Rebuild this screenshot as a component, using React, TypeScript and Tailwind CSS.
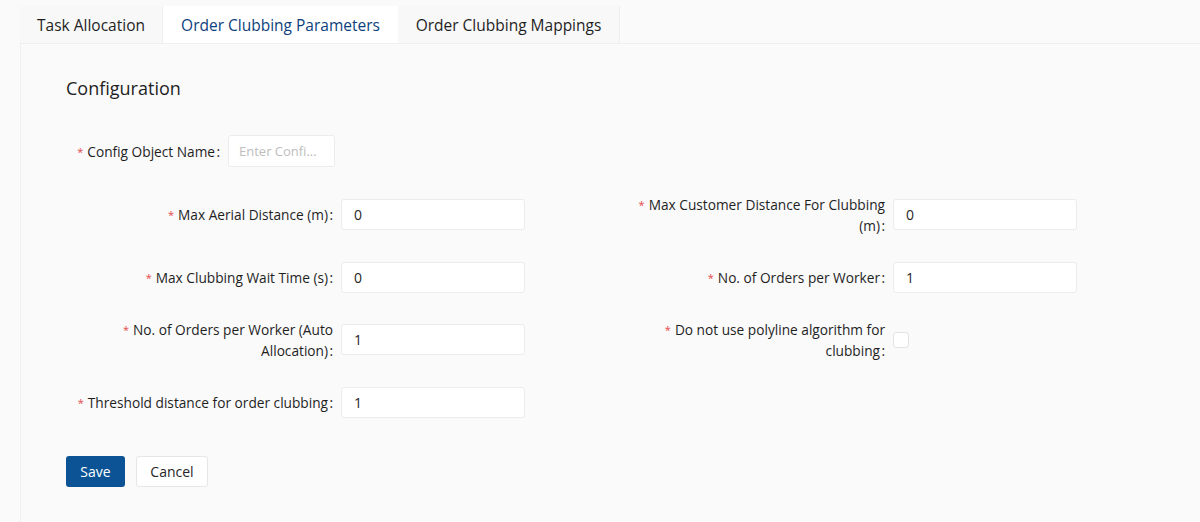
import React from "react";

const font = { fontFamily: '"Open Sans", "Noto Sans", sans-serif' };

function Label({ text, width }: { text: string; width: string }) {
  return (
    <div className={`${width} shrink-0 flex justify-end pr-2`}>
      <div className="text-right text-[13.7px] leading-[21px] text-[#1f1f1f]">
        <span className="text-[#e5484d] mr-1 text-[11px] align-top">*</span>
        {`${text}\u200a:`}
      </div>
    </div>
  );
}

function Field({ label, value }: { label: string; value: string }) {
  return (
    <div className="flex items-center h-[31px]">
      <Label text={label} width="w-[275px]" />
      <input
        readOnly
        value={value}
        className="w-[184px] h-[31px] shrink-0 bg-white border border-[#ececec] rounded-[3px] px-3 text-[14px] text-[#262626] outline-none"
      />
    </div>
  );
}

function CheckField({ label }: { label: string }) {
  return (
    <div className="flex items-center h-[31px]">
      <Label text={label} width="w-[275px]" />
      <div className="w-[16px] h-[16px] bg-white border border-[#e3e3e3] rounded-[3px]" />
    </div>
  );
}

export default function App() {
  return (
    <div className="w-[1200px] h-[522px] bg-[#fafafa] overflow-hidden" style={font}>
      <div className="pl-[20px] pt-[6px]">
        <div className="flex h-[38px] border-b border-[#efefef]">
          <div className="w-[143px] flex items-center justify-center pt-[2px] text-[15.5px] text-[#1f1f1f] bg-[#f8f8f8] border-r border-[#f0f0f0]">
            Task Allocation
          </div>
          <div className="w-[235px] flex items-center justify-center pt-[2px] text-[15.5px] text-[#0d3f7d] bg-white">
            Order Clubbing Parameters
          </div>
          <div className="w-[222px] flex items-center justify-center pt-[2px] text-[15.5px] text-[#1f1f1f] bg-[#f8f8f8] border-r border-[#eeeeee]">
            Order Clubbing Mappings
          </div>
        </div>
        <div className="border-l border-[#f0f0f0] h-[478px] pl-[45px] pt-[32px]">
          <div className="text-[18px] text-[#1f1f1f] leading-[24px]">Configuration</div>
          <div className="flex items-center mt-[35px] h-[32px]">
            <Label text="Config Object Name" width="w-[162px]" />
            <input
              readOnly
              placeholder="Enter Confi..."
              className="w-[107px] h-[32px] bg-white border border-[#ececec] rounded-[3px] px-[10px] text-[13px] text-[#262626] placeholder:text-[#bdbdbd] outline-none"
            />
          </div>
          <div className="grid grid-cols-[552px_552px] gap-y-[31.5px] mt-[32px]">
            <Field label="Max Aerial Distance (m)" value="0" />
            <Field label="Max Customer Distance For Clubbing (m)" value="0" />
            <Field label="Max Clubbing Wait Time (s)" value="0" />
            <Field label="No. of Orders per Worker" value="1" />
            <Field label="No. of Orders per Worker (Auto Allocation)" value="1" />
            <CheckField label="Do not use polyline algorithm for clubbing" />
            <Field label="Threshold distance for order clubbing" value="1" />
            <div />
          </div>
          <div className="flex gap-[11px] mt-[38px]">
            <button className="w-[59px] h-[31px] rounded-[3px] bg-[#0b5394] text-white text-[14px]">
              Save
            </button>
            <button className="w-[72px] h-[31px] rounded-[3px] bg-white border border-[#e6e6e6] text-[#262626] text-[14px]">
              Cancel
            </button>
          </div>
        </div>
      </div>
    </div>
  );
}
